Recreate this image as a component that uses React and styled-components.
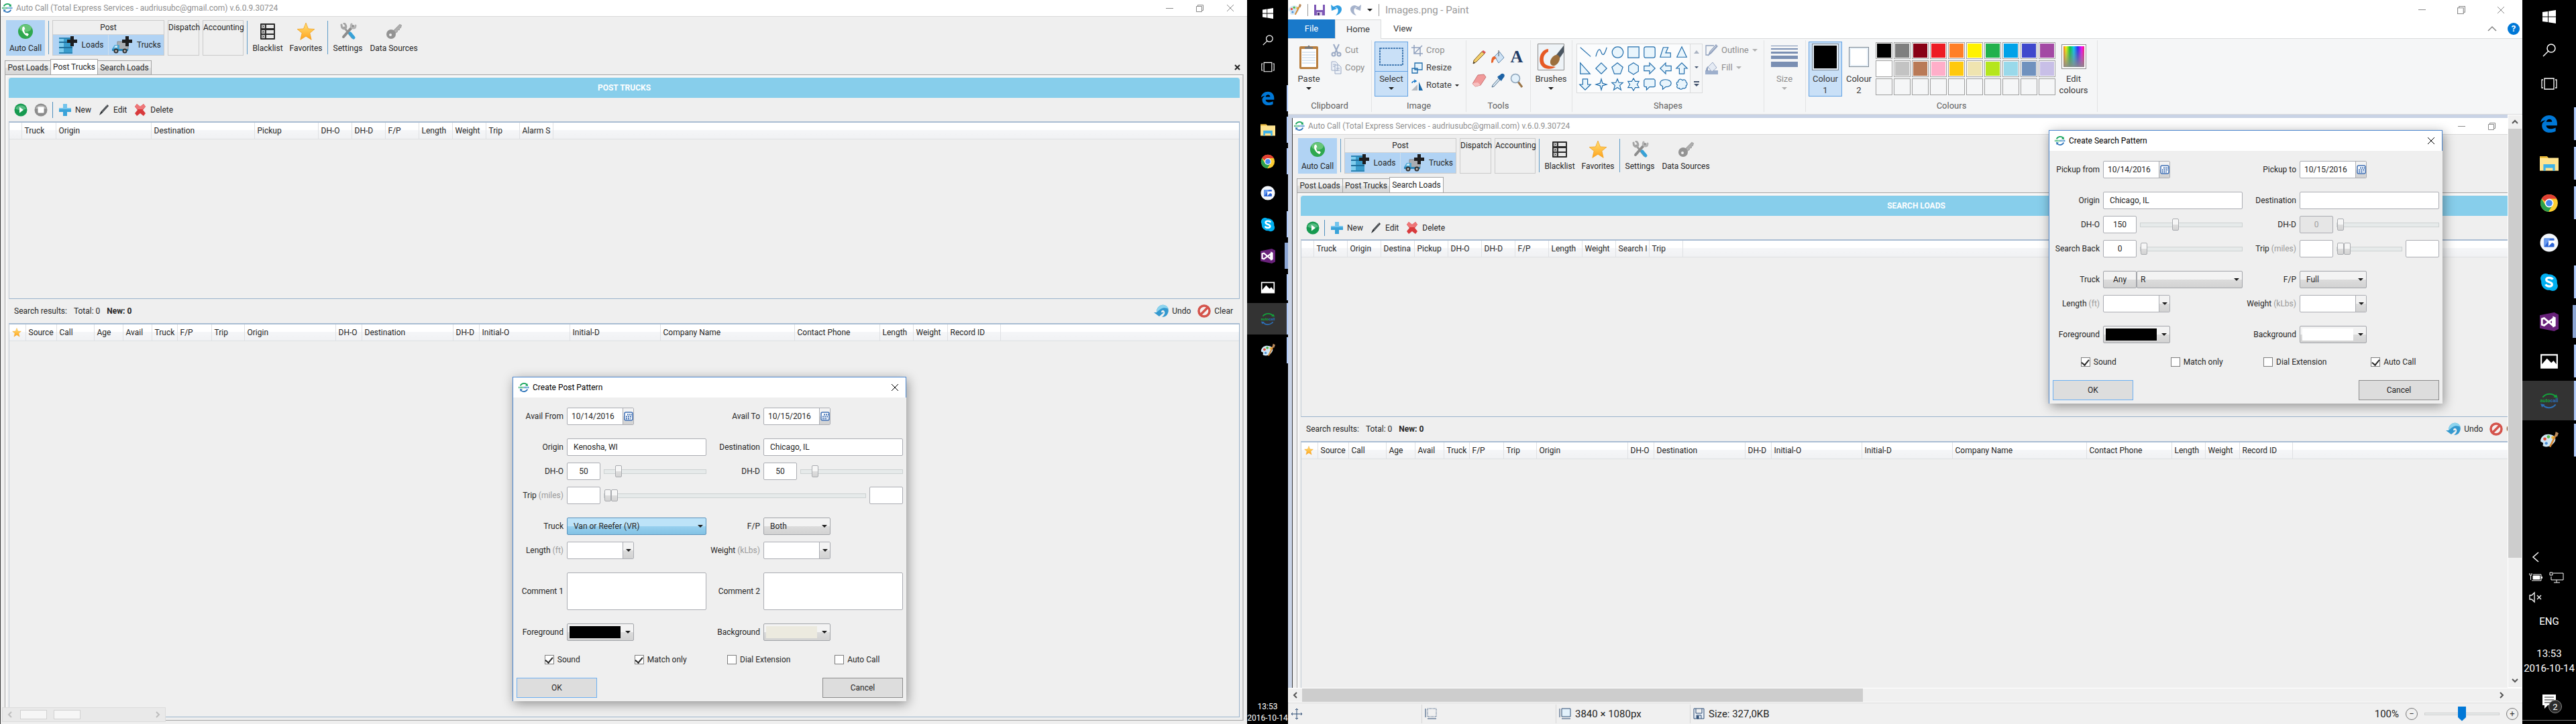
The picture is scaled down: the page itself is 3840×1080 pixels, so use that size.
import React, { useId } from "react";
import styled, { createGlobalStyle, css } from "styled-components";

const GlobalStyle = createGlobalStyle`
  * { box-sizing: border-box; }
  body { margin: 0; background: #000; }
  body, button, input, select, textarea {
    font-family: Roboto, "Open Sans", "Noto Sans", sans-serif;
    font-size: 12px;
    line-height: 16px;
    color: #262626;
  }
  button { margin: 0; padding: 0; border: 0; background: none; }
  input, select, textarea { margin: 0; }
`;

const Svg = styled.svg`
  display: block;
  flex: none;
  width: ${(p) => p.$w}px;
  height: ${(p) => p.$h || p.$w}px;
`;

/* ---------- icons ---------- */

const Logo = ({ size = 16 }) => (
  <Svg $w={size} viewBox="0 0 24 24" fill="none">
    <path d="M4 8C7 2 15 1 19 6" stroke="#14a35a" strokeWidth="2.4" />
    <path d="M21 9l-6-1 5-5z" fill="#14a35a" />
    <path d="M20 16C17 22 9 23 5 18" stroke="#2b72b8" strokeWidth="2.4" />
    <path d="M3 15l6 1-5 5z" fill="#2b72b8" />
    <path d="M0 12h12" stroke="#35b06e" strokeWidth="4" strokeDasharray="2 1" />
    <path d="M12 12h12" stroke="#3f8ac9" strokeWidth="4" strokeDasharray="2 1" />
  </Svg>
);

const PhoneIcon = () => (
  <Svg $w={24} viewBox="0 0 24 24">
    <circle cx="12" cy="12" r="11" fill="#2fa84f" />
    <ellipse cx="12" cy="7" rx="9" ry="5.5" fill="#7fd28c" opacity=".7" />
    <path d="M8 5c-3 4 1 12 7 14l2-3-3-2-1.500 1C11 13.500 10 11.500 10 9.500l1.500-1L10 4.500z" fill="#fff" />
  </Svg>
);

const PlusMark = ({ x, y }) => (
  <path d={`M${x + 5} ${y}h5v5h5v5h-5v5h-5v-5h-5v-5h5z`} fill="#1d1d1f" />
);

const BarrelIcon = () => (
  <Svg $w={30} $h={28} viewBox="0 0 30 28">
    <path d="M2 4h20v22H2z" fill="#3a9ccc" />
    <path d="M2 4h7v22H2z" fill="#7fcdee" />
    <path d="M2 10h20M2 18h20" stroke="#1f6d9a" strokeWidth="2" />
    <path d="M2 4h20M2 26h20" stroke="#2b84b4" strokeWidth="2" />
    <PlusMark x={14} y={1} />
  </Svg>
);

const TruckIcon = () => (
  <Svg $w={32} $h={28} viewBox="0 0 32 28">
    <path d="M9 9h16v12H9z" fill="#a9adb2" stroke="#85898e" />
    <path d="M1 20l4-6h7v8H1z" fill="#4aa5d3" />
    <path d="M1 20h24v3H1z" fill="#2a85b8" />
    <path d="M4 18l2-3h3v3z" fill="#cdeaf7" />
    <circle cx="7" cy="23" r="3.500" fill="#333" />
    <circle cx="7" cy="23" r="1.500" fill="#ccc" />
    <circle cx="20" cy="23" r="3.500" fill="#333" />
    <circle cx="20" cy="23" r="1.500" fill="#ccc" />
    <PlusMark x={16} y={1} />
  </Svg>
);

const BlacklistIcon = () => (
  <Svg $w={24} $h={26} viewBox="0 0 24 26">
    <rect x="1" y="1" width="22" height="24" rx="1" fill="#2b2b2b" />
    {[3, 11, 18].map((y) => (
      <g key={y}>
        <rect x="3" y={y} width="5" height="5" fill="#ddd" />
        <path d={`M4 ${y + 1}l3 3m0-3l-3 3`} stroke="#222" />
        <rect x="10" y={y} width="11" height="5" fill="#e6e6e6" />
      </g>
    ))}
  </Svg>
);

const StarIcon = ({ size = 28 }) => (
  <Svg $w={size} viewBox="0 0 24 24">
    <defs>
      <linearGradient id="starFill" x1="0" y1="0" x2="0" y2="1">
        <stop offset="0" stopColor="#ffe27a" />
        <stop offset="1" stopColor="#ffa21a" />
      </linearGradient>
    </defs>
    <path
      d="M12 1l3 7.500 8 .5-6 5 2 8.500-7-4.500-7 4.500 2-8.500-6-5 8-.5z"
      fill="url(#starFill)"
      stroke="#f0a021"
      strokeWidth=".7"
    />
  </Svg>
);

const SettingsIcon = () => (
  <Svg $w={26} viewBox="0 0 26 26" fill="none" strokeLinecap="round">
    <path d="M7 7l12 15" stroke="#9c9c9c" strokeWidth="3" />
    <path d="M3 3c0 5 3 7 6 5 2-2 0-6-2-7" stroke="#a5a5a5" strokeWidth="3" />
    <path d="M20 5L6 21" stroke="#8d8d8d" strokeWidth="4" />
    <path d="M18 2c-2 4 0 6 3 6 2 0 3-2 3-4" stroke="#b3b3b3" strokeWidth="3" />
    <path d="M16 16l5 6" stroke="#37a2d8" strokeWidth="5" />
  </Svg>
);

const KeyIcon = () => (
  <Svg $w={26} viewBox="0 0 26 26" fill="none">
    <path d="M10 15L22 3l2 1-1 3-2 1v2l-3 1v2l-4 3" fill="#b5b5b5" stroke="#a8a8a8" strokeWidth="2" />
    <circle cx="9" cy="17" r="7" fill="#939393" />
    <circle cx="8" cy="18" r="2" fill="#efefef" />
  </Svg>
);

const PlayIcon = () => (
  <Svg $w={20} viewBox="0 0 20 20">
    <circle cx="10" cy="10" r="9.500" fill="#169a50" />
    <path d="M2 8a8.500 7 0 0 1 16 0c-5 3-11 3-16 0z" fill="#6fc996" opacity=".7" />
    <path d="M8 5.500v9l6-4.500z" fill="#fff" />
  </Svg>
);

const StopIcon = () => (
  <Svg $w={20} viewBox="0 0 20 20">
    <circle cx="10" cy="10" r="9.500" fill="#8c8c8c" />
    <path d="M2 8a8.500 7 0 0 1 16 0z" fill="#b9b9b9" />
    <rect x="5.500" y="5.500" width="9" height="9" rx="1" fill="#fff" />
  </Svg>
);

const AddIcon = () => (
  <Svg $w={20} viewBox="0 0 20 20">
    <path d="M7 1h6v6h6v6h-6v6H7v-6H1V7h6z" fill="#3aa3d9" />
    <path d="M7 1h6v6h6v2H1V7h6z" fill="#73c4ec" />
  </Svg>
);

const PenIcon = () => (
  <Svg $w={18} viewBox="0 0 18 18">
    <path d="M14 1l2 2L6 14l-4 3 2-5z" fill="#2b2f33" />
    <path d="M13 2l1 1-8 9" stroke="#8b9095" fill="none" />
  </Svg>
);

const DeleteIcon = () => (
  <Svg $w={20} viewBox="0 0 20 20">
    <path d="M2 5l3-4 5 4 5-4 3 4-4 5 4 5-3 4-5-4-5 4-3-4 4-5z" fill="#d83a3c" />
    <path d="M2 5l3-4 5 4 5-4 3 4-4 4H6z" fill="#ee7678" />
  </Svg>
);

const UndoIcon = () => (
  <Svg $w={22} $h={20} viewBox="0 0 22 20">
    <path d="M0 12h4C4 4 10 0 15 1c6 1 8 7 6 12-1 3-4 6-9 6 4-3 5-6 4-8-1-3-4-3-5 0v1h4l-7 6z" fill="#3499cf" />
    <path d="M4 12C4 4 10 0 15 1c4 .5 6 3 7 6-5-3-10-3-18 5z" fill="#8dd4ee" />
  </Svg>
);

const ClearIcon = () => (
  <Svg $w={20} viewBox="0 0 20 20" fill="none">
    <circle cx="10" cy="10" r="8" stroke="#d4534b" strokeWidth="3.500" fill="#f5f0f0" />
    <path d="M5 15L15 5" stroke="#d4534b" strokeWidth="3.500" />
  </Svg>
);

const CalendarIcon = () => (
  <Svg $w={14} viewBox="0 0 14 14">
    <rect x="1" y="1" width="12" height="12" rx="2" fill="#fff" stroke="#3c6eb4" strokeWidth="1.500" />
    <path d="M5 4.500h7M3 7.500h9M3 10.500h7" stroke="#3c6eb4" strokeWidth="2" strokeDasharray="2 1" />
  </Svg>
);

const Caret = styled.span`
  display: block;
  flex: none;
  width: 0;
  height: 0;
  border: ${(p) => p.$s || 4}px solid transparent;
  border-bottom: 0;
  border-top-color: ${(p) => p.$color || "#1e1e1e"};
  pointer-events: none;
`;

const CloseGlyph = ({ color = "#000", size = 12 }) => (
  <Svg $w={size} viewBox="0 0 12 12" fill="none" stroke={color}>
    <path d="M1 1l10 10M11 1L1 11" />
  </Svg>
);

const MinGlyph = () => (
  <Svg $w={11} viewBox="0 0 11 11" stroke="#8a8a8a">
    <path d="M0 5.500h11" />
  </Svg>
);

const RestoreGlyph = ({ size = 11 }) => (
  <Svg $w={size} viewBox="0 0 11 11" fill="none" stroke="#8a8a8a">
    <path d="M.5 2.500h8v8h-8zM2.500 2.500v-2h8v8h-2" />
  </Svg>
);

/* ---------- form parts ---------- */

const field = css`
  width: 100%;
  min-width: 0;
  height: 26px;
  border: 1px solid #abadb3;
  border-radius: 2px;
  background: #fff;
  outline: 0;
`;

const chrome = css`
  border: 1px solid #a3a5aa;
  border-radius: 2px;
  background: linear-gradient(#f3f3f3 0 50%, #dcdcdc 50%, #d2d2d2);
`;

const TextInput = styled.input`
  ${field}
  padding: ${(p) => (p.$center ? "0" : "0 9px")};
  text-align: ${(p) => (p.$center ? "center" : "left")};
  &:disabled { background: #e6e6e6; color: #a0a0a0; }
`;

const TextArea = styled.textarea`
  ${field}
  display: block;
  height: 56px;
  resize: none;
`;

const Joined = styled.div`
  display: flex;
  width: 100px;
  height: 26px;
  border: 1px solid #abadb3;
  border-radius: 2px;
  background: #fff;
  overflow: hidden;
  input { flex: 1; min-width: 0; border: 0; outline: 0; padding: 0 6px; background: none; }
  button {
    display: grid;
    place-items: center;
    width: 16px;
    border-left: 1px solid #abadb3;
    background: linear-gradient(#f3f3f3 0 50%, #dcdcdc 50%, #d2d2d2);
  }
`;

const SelectBox = styled.div`
  display: grid;
  align-items: center;
  width: ${(p) => p.$w || "100%"};
  min-width: 0;
  > * { grid-area: 1 / 1; }
  > span { justify-self: end; margin-right: 5px; }
  select {
    ${chrome}
    appearance: none;
    width: 100%;
    height: 26px;
    padding: 0 9px;
    ${(p) => p.$tight && "padding: 0 5px;"}
    ${(p) =>
      p.$hot &&
      "border-color: #5a93bd; background: linear-gradient(#bde3f8 0 50%, #98d0ef 50%, #82c2e4);"}
  }
`;

const AnyButton = styled.button`
  ${chrome}
  flex: none;
  width: 50px;
  height: 26px;
`;

const ColourPick = styled.button`
  ${chrome}
  display: flex;
  align-items: center;
  justify-content: space-between;
  width: 100px;
  height: 26px;
  padding: 0 4px 0 3px;
  i { width: 76px; height: 18px; background: ${(p) => p.$color}; }
`;

const Range = styled.input`
  appearance: none;
  flex: 1;
  width: 100%;
  min-width: 0;
  height: 18px;
  background: none;
  &::-webkit-slider-runnable-track {
    height: 7px;
    border: 1px solid #cdd2d2;
    background: #e6eaea;
    ${(p) => p.$bare && "border-color: transparent; background: none;"}
  }
  &::-webkit-slider-thumb {
    appearance: none;
    width: 10px;
    height: 18px;
    margin-top: -7px;
    border: 1px solid #a9abaf;
    border-radius: 2px;
    background: linear-gradient(#f6f6f6 0 50%, #dedede 50%, #d4d4d4);
  }
`;

const DoubleRange = styled.div`
  display: grid;
  flex: 1;
  min-width: 0;
  > * { grid-area: 1 / 1; }
  > :last-child { margin-left: 10px; width: auto; }
`;

const Inline = styled.div`
  display: flex;
  align-items: center;
  gap: ${(p) => (p.$flush ? 0 : 5)}px;
  min-width: 0;
  ${(p) => p.$span && "grid-column: 2 / -1;"}
`;

const Small = styled.div`
  flex: none;
  width: 50px;
`;

const FormRow = styled.div`
  display: grid;
  grid-template-columns: 80px 1fr 85px 1fr;
  align-items: center;
  margin-top: ${(p) => (p.$gap ? 20 : 10)}px;
`;

const Label = styled.label`
  padding-right: 5px;
  text-align: right;
  white-space: nowrap;
  i { font-style: normal; color: #9a9a9a; }
`;

const Unit = ({ text, unit, id }) => (
  <Label htmlFor={id}>
    {text}
    {unit && <i> ({unit})</i>}
  </Label>
);

const DateField = ({ label, value }) => {
  const id = useId();
  return (
    <>
      <Unit text={label} id={id} />
      <Joined>
        <input id={id} defaultValue={value} />
        <button aria-label={`${label} calendar`}><CalendarIcon /></button>
      </Joined>
    </>
  );
};

const TextField = ({ label, value = "" }) => {
  const id = useId();
  return (
    <>
      <Unit text={label} id={id} />
      <TextInput id={id} defaultValue={value} />
    </>
  );
};

const AreaField = ({ label }) => {
  const id = useId();
  return (
    <>
      <Unit text={label} id={id} />
      <TextArea id={id} />
    </>
  );
};

const RangeField = ({ label, value, max = 450, disabled }) => {
  const id = useId();
  return (
    <>
      <Unit text={label} id={id} />
      <Inline>
        <Small><TextInput $center id={id} defaultValue={value} disabled={disabled} /></Small>
        <Range type="range" aria-label={`${label} range`} max={max} defaultValue={value} disabled={disabled} />
      </Inline>
    </>
  );
};

const TripField = ({ span }) => {
  const id = useId();
  return (
    <>
      <Unit text="Trip" unit="miles" id={id} />
      <Inline $span={span}>
        <Small><TextInput $center id={id} /></Small>
        <DoubleRange>
          <Range type="range" aria-label="Minimum trip" defaultValue={0} />
          <Range $bare type="range" aria-label="Maximum trip" defaultValue={0} />
        </DoubleRange>
        <Small><TextInput $center aria-label="Trip to" /></Small>
      </Inline>
    </>
  );
};

const ChoiceField = ({ label, value, w, hot, prefix }) => {
  const id = useId();
  const box = (
    <SelectBox $w={w} $hot={hot} $tight={!!prefix}>
      <select id={id}><option>{value}</option></select>
      <Caret />
    </SelectBox>
  );
  return (
    <>
      <Unit text={label} id={id} />
      {prefix ? <Inline $flush><AnyButton>{prefix}</AnyButton>{box}</Inline> : box}
    </>
  );
};

const ComboField = ({ label, unit }) => {
  const id = useId();
  return (
    <>
      <Unit text={label} unit={unit} id={id} />
      <Joined>
        <input id={id} />
        <button aria-label={`${label} options`}><Caret /></button>
      </Joined>
    </>
  );
};

const ColourField = ({ label, color }) => {
  const id = useId();
  return (
    <>
      <Unit text={label} id={id} />
      <ColourPick id={id} $color={color}><i /><Caret /></ColourPick>
    </>
  );
};

const Checks = styled.div`
  display: grid;
  grid-template-columns: repeat(4, 1fr);
  place-items: center;
  height: 55px;
`;

const CheckLabel = styled.label`
  display: flex;
  align-items: center;
  gap: 5px;
`;

const CheckBox = styled.input`
  appearance: none;
  display: grid;
  place-items: center;
  width: 14px;
  height: 14px;
  border: 1px solid #7e7e7e;
  background: #fff;
  &:checked::before {
    content: "";
    width: 5px;
    height: 9px;
    margin-bottom: 2px;
    border: solid #222;
    border-width: 0 2px 2px 0;
    transform: rotate(40deg);
  }
`;

const CheckRow = ({ checked }) => (
  <Checks>
    {["Sound", "Match only", "Dial Extension", "Auto Call"].map((text) => (
      <CheckLabel key={text}>
        <CheckBox type="checkbox" defaultChecked={checked.includes(text)} />
        {text}
      </CheckLabel>
    ))}
  </Checks>
);

/* ---------- dialogs ---------- */

const DialogFrame = styled.section`
  position: absolute;
  left: ${(p) => p.$x}px;
  top: ${(p) => p.$y}px;
  width: 587px;
  border-left: 1px solid #4a86cf;
  background: #efefef;
  box-shadow: 2px 4px 16px rgba(0, 0, 0, 0.4);
`;

const DialogTitle = styled.header`
  display: flex;
  align-items: center;
  gap: 5px;
  height: 31px;
  padding: 0 10px 0 8px;
  border: solid #4a86cf;
  border-width: 1px 1px 0 0;
  background: #fff;
  color: #000;
  button { margin-left: auto; }
`;

const Form = styled.div`
  padding: 5px 5px 0 0;
`;

const DialogFooter = styled.footer`
  display: flex;
  justify-content: space-between;
  padding: 0 5px 5px;
`;

const DialogButton = styled.button`
  width: 120px;
  height: 30px;
  border: 1px solid ${(p) => (p.$main ? "#6cb0f2" : "#8c8c8c")};
  background: #dddddd;
`;

const Dialog = ({ title, x, y, checked, children }) => (
  <DialogFrame $x={x} $y={y}>
    <DialogTitle>
      <Logo />
      {title}
      <button aria-label="Close"><CloseGlyph /></button>
    </DialogTitle>
    <Form>{children}</Form>
    <CheckRow checked={checked} />
    <DialogFooter>
      <DialogButton $main>OK</DialogButton>
      <DialogButton>Cancel</DialogButton>
    </DialogFooter>
  </DialogFrame>
);

const PostDialog = () => (
  <Dialog title="Create Post Pattern" x={764} y={562} checked={["Sound", "Match only"]}>
    <FormRow><DateField label="Avail From" value="10/14/2016" /><DateField label="Avail To" value="10/15/2016" /></FormRow>
    <FormRow $gap><TextField label="Origin" value="Kenosha, WI" /><TextField label="Destination" value="Chicago, IL" /></FormRow>
    <FormRow><RangeField label="DH-O" value={50} /><RangeField label="DH-D" value={50} /></FormRow>
    <FormRow><TripField span /></FormRow>
    <FormRow $gap><ChoiceField label="Truck" value="Van or Reefer (VR)" hot /><ChoiceField label="F/P" value="Both" w="100px" /></FormRow>
    <FormRow><ComboField label="Length" unit="ft" /><ComboField label="Weight" unit="kLbs" /></FormRow>
    <FormRow $gap><AreaField label="Comment 1" /><AreaField label="Comment 2" /></FormRow>
    <FormRow $gap><ColourField label="Foreground" color="#000" /><ColourField label="Background" color="#eceadf" /></FormRow>
  </Dialog>
);

const SearchDialog = () => (
  <Dialog title="Create Search Pattern" x={1134} y={23} checked={["Sound", "Auto Call"]}>
    <FormRow><DateField label="Pickup from" value="10/14/2016" /><DateField label="Pickup to" value="10/15/2016" /></FormRow>
    <FormRow $gap><TextField label="Origin" value="Chicago, IL" /><TextField label="Destination" /></FormRow>
    <FormRow><RangeField label="DH-O" value={150} /><RangeField label="DH-D" value={0} disabled /></FormRow>
    <FormRow><RangeField label="Search Back" value={0} /><TripField /></FormRow>
    <FormRow $gap><ChoiceField label="Truck" value="R" prefix="Any" /><ChoiceField label="F/P" value="Full" w="100px" /></FormRow>
    <FormRow><ComboField label="Length" unit="ft" /><ComboField label="Weight" unit="kLbs" /></FormRow>
    <FormRow $gap><ColourField label="Foreground" color="#000" /><ColourField label="Background" color="#fff" /></FormRow>
  </Dialog>
);

/* ---------- Auto Call window ---------- */

const AppFrame = styled.section`
  display: flex;
  flex-direction: column;
  flex: none;
  width: calc(50vw - 61px);
  height: 100vh;
  border-left: 1px solid #3a3a3a;
  background: #efefef;
  white-space: nowrap;
`;

const AppTitle = styled.header`
  display: flex;
  align-items: center;
  gap: 5px;
  height: 25px;
  padding: 0 19px 0 2px;
  border-bottom: 1px solid #d9d9d9;
  background: #fff;
  color: #8f8f8f;
`;

const WindowButtons = styled.div`
  display: flex;
  gap: ${(p) => p.$gap}px;
  margin-left: auto;
`;

const AppToolbar = styled.div`
  display: flex;
  gap: 5px;
  height: 60px;
  padding: 5px 8px 2px;
`;

const Tool = styled.button`
  display: flex;
  flex-direction: column;
  align-items: center;
  justify-content: space-between;
  flex: none;
  width: ${(p) => p.$w}px;
  padding: 3px 0;
  background: ${(p) => (p.$on ? "#b1d3f4" : "none")};
`;

const ToolArt = styled.span`
  display: grid;
  place-items: center;
  height: 28px;
`;

const Rule = styled.span`
  flex: none;
  width: 1px;
  margin: 1px 0 2px;
  background: #5f9cc8;
`;

const Group = styled.div`
  display: flex;
  flex-direction: column;
  flex: none;
  width: ${(p) => p.$w}px;
  border: 1px solid #cbcbcb;
  text-align: center;
  > span { line-height: 20px; }
  > div { display: flex; flex: 1; border-top: 1px solid #d5d5d5; }
`;

const GroupButton = styled.button`
  display: flex;
  align-items: center;
  justify-content: center;
  gap: 6px;
  flex: 1;
  background: #b1d3f4;
  & + & { border-left: 1px solid #cfdfee; }
`;

const TabBar = styled.div`
  display: flex;
  align-items: flex-end;
  height: 26px;
  padding: 0 10px 0 6px;
  > button:last-child { margin-left: auto; align-self: center; margin-top: 4px; font-weight: 700; }
`;

const Tab = styled.button`
  width: ${(p) => p.$w}px;
  height: ${(p) => (p.$on ? 23 : 21)}px;
  margin-right: -1px;
  border: 1px solid #a3a3a3;
  border-bottom: 0;
  background: ${(p) => (p.$on ? "#fff" : "linear-gradient(#f2f2f2 0 50%, #e2e2e2 50%, #d6d6d6)")};
`;

const TabPanel = styled.div`
  display: flex;
  flex-direction: column;
  flex: 1;
  min-height: 0;
  margin: 0 5px 5px 6px;
  padding: 4px 4px 4px 5px;
  border: 1px solid #a5a5a5;
  border-right: 2px solid #c4c4c4;
  box-shadow: inset 3px 3px 0 #f7f7f7;
`;

const Banner = styled.h1`
  flex: none;
  margin: 0;
  border-radius: 4px 4px 0 0;
  background: #87ceeb;
  color: #fff;
  font-size: 12px;
  line-height: 30px;
  text-align: center;
`;

const Actions = styled.div`
  display: flex;
  align-items: center;
  gap: ${(p) => (p.$results ? 10 : 10)}px;
  flex: none;
  height: ${(p) => (p.$results ? 36 : 35)}px;
  padding: 0 10px 0 8px;
  hr { width: 1px; height: 24px; margin: 0 -2px 0 -3px; border: 0; background: #4f8fbd; }
`;

const Action = styled.button`
  display: flex;
  align-items: center;
  gap: 5px;
  ${(p) => p.$end && "margin-left: auto;"}
`;

const List = styled.div`
  flex: ${(p) => (p.$fill ? "1" : "0 0 265px")};
  min-height: 0;
  border: 1px solid #9ab3cc;
  border-top: 2px solid #a9bdd3;
  border-left-color: #c3ccd6;
`;

const Table = styled.table`
  width: 100%;
  border-collapse: collapse;
  table-layout: fixed;
  th {
    height: 24px;
    padding: 0 0 0 4px;
    border: solid #dfe1e4;
    border-width: 0 1px 1px 0;
    background: linear-gradient(#fff 0 45%, #f5f6f8 45%, #f0f1f3);
    font-weight: 400;
    text-align: left;
    overflow: hidden;
  }
  th:last-child { border-right: 0; }
`;

const Columns = ({ items }) => (
  <Table>
    <colgroup>
      {items.map(([, w], i) => <col key={i} width={w} />)}
      <col />
    </colgroup>
    <thead>
      <tr>
        {items.map(([name], i) => <th key={i} scope="col">{name}</th>)}
        <th />
      </tr>
    </thead>
  </Table>
);

const POST_COLUMNS = [
  ["", 18], ["Truck", 51], ["Origin", 142], ["Destination", 154], ["Pickup", 95], ["DH-O", 50],
  ["DH-D", 50], ["F/P", 50], ["Length", 50], ["Weight", 50], ["Trip", 50], ["Alarm S", 50],
];

const SEARCH_COLUMNS = [
  ["", 18], ["Truck", 50], ["Origin", 50], ["Destina", 50], ["Pickup", 50], ["DH-O", 50],
  ["DH-D", 50], ["F/P", 50], ["Length", 50], ["Weight", 50], ["Search I", 50], ["Trip", 50],
];

const RESULT_COLUMNS = [
  [<StarIcon key="star" size={14} />, 24], ["Source", 46], ["Call", 56], ["Age", 43], ["Avail", 43], ["Truck", 38],
  ["F/P", 51], ["Trip", 49], ["Origin", 136], ["DH-O", 39], ["Destination", 136], ["DH-D", 39],
  ["Initial-O", 135], ["Initial-D", 135], ["Company Name", 200], ["Contact Phone", 127],
  ["Length", 50], ["Weight", 51], ["Record ID", 79],
];

const TABS = [["Post Loads", 69], ["Post Trucks", 71], ["Search Loads", 81]];

const AppWindow = ({ active, columns, stoppable }) => (
  <AppFrame>
    <AppTitle>
      <Logo />
      Auto Call (Total Express Services - audriusubc@gmail.com) v.6.0.9.30724
      <WindowButtons $gap={34}>
        <button aria-label="Minimise"><MinGlyph /></button>
        <button aria-label="Restore"><RestoreGlyph /></button>
        <button aria-label="Close window"><CloseGlyph color="#8a8a8a" size={12} /></button>
      </WindowButtons>
    </AppTitle>
    <AppToolbar>
      <Tool $w={58} $on><ToolArt><PhoneIcon /></ToolArt>Auto Call</Tool>
      <Rule />
      <Group $w={167}>
        <span>Post</span>
        <div>
          <GroupButton><BarrelIcon />Loads</GroupButton>
          <GroupButton><TruckIcon />Trucks</GroupButton>
        </div>
      </Group>
      <Group $w={47}><span>Dispatch</span></Group>
      <Group $w={61}><span>Accounting</span></Group>
      <Rule />
      <Tool $w={50}><ToolArt><BlacklistIcon /></ToolArt>Blacklist</Tool>
      <Tool $w={54}><ToolArt><StarIcon /></ToolArt>Favorites</Tool>
      <Rule />
      <Tool $w={49}><ToolArt><SettingsIcon /></ToolArt>Settings</Tool>
      <Tool $w={78}><ToolArt><KeyIcon /></ToolArt>Data Sources</Tool>
    </AppToolbar>
    <TabBar>
      {TABS.map(([name, w]) => <Tab key={name} $w={w} $on={name === active}>{name}</Tab>)}
      <button aria-label="Close tab">
        <Svg $w={9} viewBox="0 0 9 9" stroke="#222" strokeWidth="2"><path d="M1 1l7 7M8 1L1 8" /></Svg>
      </button>
    </TabBar>
    <TabPanel>
      <Banner>{active.toUpperCase()}</Banner>
      <Actions>
        <Action aria-label="Start"><PlayIcon /></Action>
        {stoppable && <Action aria-label="Stop"><StopIcon /></Action>}
        <hr />
        <Action><AddIcon />New</Action>
        <Action><PenIcon />Edit</Action>
        <Action><DeleteIcon />Delete</Action>
      </Actions>
      <List><Columns items={columns} /></List>
      <Actions $results>
        <span>Search results:</span>
        <span>Total: 0</span>
        <b>New: 0</b>
        <Action $end><UndoIcon />Undo</Action>
        <Action><ClearIcon />Clear</Action>
      </Actions>
      <List $fill><Columns items={RESULT_COLUMNS} /></List>
    </TabPanel>
  </AppFrame>
);

/* ---------- task bars ---------- */

const Bar = styled.nav`
  display: flex;
  flex-direction: column;
  flex: none;
  width: ${(p) => (p.$large ? 80 : 61)}px;
  height: 100vh;
  background: #000;
  color: #fff;
`;

const SystemButton = styled.button`
  display: grid;
  place-items: center;
  flex: none;
  height: ${(p) => (p.$large ? 50 : 40)}px;
`;

const TaskList = styled.div`
  padding-top: ${(p) => (p.$large ? 5 : 3)}px;
`;

const TaskButton = styled.button`
  display: grid;
  grid-template-columns: 5px 1fr 5px;
  place-items: center;
  width: 100%;
  height: ${(p) => (p.$large ? 59 : 47)}px;
  background: ${(p) => (p.$mark === "active" ? "#333" : "none")};
  svg { grid-column: 2; }
  &::after {
    content: "";
    grid-area: 1 / 3;
    justify-self: end;
    width: ${(p) => ({ none: 0, double: 5 })[p.$mark] ?? (p.$large ? 3 : 2)}px;
    height: ${(p) => (p.$mark === "active" ? "100%" : "82%")};
    background: ${(p) => (p.$mark === "double" ? "#8ba5d3" : "#b0cbfb")};
  }
`;

const Tray = styled.div`
  display: flex;
  flex-direction: column;
  margin-top: auto;
  font-size: ${(p) => (p.$large ? 15 : 12)}px;
  line-height: ${(p) => (p.$large ? 22 : 17)}px;
  text-align: center;
`;

const TrayRow = styled.div`
  display: flex;
  align-items: center;
  gap: 10px;
  height: 30px;
  padding-left: 10px;
`;

const TrayLabel = styled.div`
  display: grid;
  align-content: center;
  height: ${(p) => p.$h}px;
`;

const ShowDesktop = styled.div`
  height: 6px;
  border-top: 1px solid #777;
`;

const Windows = ({ s }) => (
  <Svg $w={s} viewBox="0 0 20 20" fill="#fff">
    <path d="M0 3l8-1v7.500H0zM9 1.800L20 0v9.500H9zM0 10.500h8V18l-8-1zM9 10.500h11V20L9 18.200z" />
  </Svg>
);

const SearchGlyph = ({ s }) => (
  <Svg $w={s} viewBox="0 0 20 20" fill="none" stroke="#fff" strokeWidth="1.500">
    <circle cx="13" cy="7" r="6" />
    <path d="M9 11L1 19" />
  </Svg>
);

const TaskView = ({ s }) => (
  <Svg $w={s + 4} viewBox="0 0 24 24" fill="none" stroke="#fff" strokeWidth="1.300">
    <path d="M5 4h14v16H5zM3 6H1v12h2M21 6h2v12h-2" />
  </Svg>
);

const TASKS = [
  ["Edge", "on", (
    <path d="M1 11C2 5 7 1 13 1c7 0 11 5 11 11v3H9c0 5 7 6 13 3v5C14 27 3 25 3 15c0-3 2-5 5-7-2 0-5 1-7 3zm8-1h8c0-5-7-5-8 0z" fill="#0078d7" />
  )],
  ["File Explorer", "on", (
    <>
      <path d="M0 3h10l2 2h14v18H0z" fill="#ffe490" />
      <path d="M0 3h10l2 2H0z" fill="#e9b52c" />
      <path d="M5 14h16v9h-3v-4H8v4H5z" fill="#3fb2e8" />
    </>
  )],
  ["Chrome", "on", (
    <>
      <circle cx="13" cy="13" r="12" fill="#fccd32" />
      <path d="M13 1a12 12 0 0 1 10.500 6H13l-5 4-5.500-4A12 12 0 0 1 13 1z" fill="#e24134" />
      <path d="M2.500 7A12 12 0 0 0 12 25l5-8-9-1z" fill="#2ca04e" />
      <circle cx="13" cy="13" r="6" fill="#fff" />
      <circle cx="13" cy="13" r="4.500" fill="#4688f1" />
    </>
  )],
  ["Remote Desktop", "none", (
    <>
      <circle cx="13" cy="13" r="12.500" fill="#f4f7fb" />
      <rect x="6" y="7" width="14" height="12" rx="1" fill="#2a62d4" />
      <path d="M6 7h9L6 19z" fill="#6a9df0" />
      <path d="M12 10h9v5l-4-2-5 5z" fill="#fff" />
    </>
  )],
  ["Skype", "on", (
    <>
      <circle cx="8" cy="8" r="7" fill="#00aff0" />
      <circle cx="18" cy="18" r="7" fill="#00aff0" />
      <circle cx="13" cy="13" r="11" fill="#00aff0" />
      <path d="M18 9c-2-3-9-3-9 .5 0 4 8 2.500 8 6.500 0 3.500-7 3.500-9 0" stroke="#fff" strokeWidth="3" fill="none" />
    </>
  )],
  ["Visual Studio", "double", (
    <>
      <path d="M0 4l20-4 6 3v20l-6 3-20-4z" fill="#68217a" />
      <path d="M3 9v8l3 1 12-9v9L6 8z" stroke="#fff" strokeWidth="2.500" fill="none" />
      <path d="M18 5l4 2v12l-4 2z" fill="#fff" />
    </>
  )],
  ["Photos", "on", (
    <>
      <path d="M1 3h24v20H1z" fill="#fff" />
      <path d="M3 5h20v12l-4-5-3 3-6-6-7 8z" fill="#000" />
    </>
  )],
  ["Auto Call", "active", (
    <>
      <path d="M4 8C9 2 18 2 23 8" stroke="#14a03c" strokeWidth="2" fill="none" />
      <path d="M25 9l-6-1 4-4z" fill="#14a03c" />
      <path d="M22 18C17 24 8 24 4 18" stroke="#2d6fb5" strokeWidth="2" fill="none" />
      <path d="M1 17l6 1-4 4z" fill="#2d6fb5" />
      <text x="13" y="15" textAnchor="middle" fontSize="7" fontWeight="700" fill="#14a03c">
        auto<tspan fill="#2d6fb5">call</tspan>
      </text>
    </>
  )],
  ["Paint", "on", (
    <>
      <path d="M1 13C2 6 9 3 16 5c7 2 7 8 3 12-3 4-9 6-14 4-2-1 1-4-1-5-1-1-3 0-3-3z" fill="#cfe6f5" />
      <circle cx="7" cy="11" r="2.200" fill="#e2503d" />
      <circle cx="12" cy="8" r="2.200" fill="#58b947" />
      <circle cx="18" cy="9" r="2" fill="#f2b632" />
      <circle cx="9" cy="17" r="2" fill="#4d8fd6" />
      <path d="M24 2L14 22" stroke="#d78a37" strokeWidth="2.500" />
      <path d="M22 1l4 2-2 5-3-1z" fill="#b98b5f" />
    </>
  )],
];

const TaskBar = ({ large }) => {
  const s = large ? 20 : 16;
  return (
    <Bar $large={large}>
      <SystemButton $large={large} aria-label="Start"><Windows s={s} /></SystemButton>
      <SystemButton $large={large} aria-label="Search"><SearchGlyph s={s} /></SystemButton>
      <SystemButton $large={large} aria-label="Task view"><TaskView s={s} /></SystemButton>
      <TaskList $large={large}>
        {TASKS.map(([name, mark, art]) => (
          <TaskButton key={name} $large={large} $mark={mark} aria-label={name}>
            <Svg $w={large ? 28 : 22} viewBox="0 0 26 26" overflow="visible">{art}</Svg>
          </TaskButton>
        ))}
      </TaskList>
      <Tray $large={large}>
        {large && (
          <>
            <TrayRow>
              <Svg $w={20} viewBox="0 0 20 20" fill="none" stroke="#fff" strokeWidth="1.500"><path d="M14 3L6 10l8 7" /></Svg>
            </TrayRow>
            <TrayRow>
              <Svg $w={20} viewBox="0 0 20 20" fill="none" stroke="#fff">
                <path d="M1 4v3h3V4M2.500 7v7M6 6h12v9H4" />
                <path d="M6 8h10v5H6z" fill="#fff" />
                <path d="M19 9v3" strokeWidth="2" />
              </Svg>
              <Svg $w={22} viewBox="0 0 22 20" fill="none" stroke="#fff">
                <path d="M6 4h15v10H3V9M1 3h4v4H1zM11 14v4M7 18h9" />
              </Svg>
            </TrayRow>
            <TrayRow>
              <Svg $w={20} viewBox="0 0 20 20" fill="none" stroke="#fff" strokeWidth="1.300">
                <path d="M1 7h3l4-4v14l-4-4H1zM12 7l6 6M18 7l-6 6" />
              </Svg>
            </TrayRow>
            <TrayLabel $h={42}>ENG</TrayLabel>
          </>
        )}
        <TrayLabel $h={large ? 76 : 34}>
          <span>13:53</span>
          <span>2016-10-14</span>
        </TrayLabel>
        {large && (
          <>
            <SystemButton $large aria-label="Notifications">
              <Svg $w={40} $h={36} viewBox="0 0 40 36">
                <path d="M10 5h20v16H18l-5 5v-5h-3z" fill="#fff" />
                <path d="M13 9h14M13 13h14M13 17h9" stroke="#222" />
                <circle cx="29" cy="23" r="9.500" fill="#2b2b2b" stroke="#888" />
                <text x="29" y="28" textAnchor="middle" fontSize="13" fill="#fff">2</text>
              </Svg>
            </SystemButton>
            <ShowDesktop />
          </>
        )}
      </Tray>
    </Bar>
  );
};

/* ---------- Paint ---------- */

const PaintFrame = styled.section`
  display: flex;
  flex-direction: column;
  flex: 1;
  min-width: 0;
  height: 100vh;
  background: #fff;
  font-size: 13px;
  button { font-size: 13px; color: #3b3b3b; }
`;

const PaintTitle = styled.header`
  display: flex;
  align-items: center;
  gap: 9px;
  flex: none;
  height: 29px;
  padding-right: 26px;
  color: #999;
  font-size: 15px;
  hr { width: 1px; height: 18px; margin: 0; border: 0; background: #999; }
`;

const PaintTabs = styled.div`
  display: flex;
  align-items: stretch;
  flex: none;
  height: 29px;
  padding-right: 4px;
  border-bottom: 1px solid #dadbdc;
`;

const RibbonTab = styled.button`
  width: ${(p) => p.$w}px;
  ${(p) => p.$file && "&& { background: #1979ca; color: #fff; }"}
  ${(p) => p.$on && "margin-bottom: -1px; border: 1px solid #dadbdc; border-bottom: 0; background: #f5f6f7;"}
`;

const TabTools = styled.div`
  display: flex;
  align-items: center;
  gap: 16px;
  margin-left: auto;
`;

const Help = styled.span`
  display: grid;
  place-items: center;
  width: 18px;
  height: 18px;
  border-radius: 50%;
  background: #0078d7;
  color: #fff;
  font-weight: 700;
`;

const Ribbon = styled.div`
  display: flex;
  flex: none;
  height: 113px;
  padding: 2px 0 3px;
  border-bottom: 1px solid #dadbdc;
  background: #f5f6f7;
`;

const RibbonGroup = styled.div`
  display: flex;
  flex-direction: column;
  justify-content: space-between;
  flex: none;
  width: ${(p) => p.$w}px;
  padding-top: 2px;
  border-right: 1px solid #e2e3e4;
  > footer { color: #5f5f5f; text-align: center; line-height: 18px; }
`;

const RibbonBody = styled.div`
  display: flex;
  gap: ${(p) => p.$gap || 0}px;
  padding: 0 4px;
`;

const BigButton = styled.button`
  display: flex;
  flex-direction: column;
  align-items: center;
  flex: none;
  width: ${(p) => p.$w || 50}px;
  height: 82px;
  line-height: 17px;
  ${(p) => p.$on && "background: #c9e0f7; outline: 1px solid #62a2e4; outline-offset: -1px;"}
  && { color: ${(p) => (p.$off ? "#8d8d8d" : "#3b3b3b")}; }
  > span:first-child {
    display: grid;
    place-items: center;
    align-self: stretch;
    height: 45px;
    margin-bottom: 2px;
    ${(p) => p.$split && "border-bottom: 1px solid #62a2e4;"}
  }
  > span:last-child:not(:first-child) { margin-top: 4px; }
`;

const Stack = styled.div`
  display: flex;
  flex-direction: column;
`;

const RowButton = styled.button`
  display: flex;
  align-items: center;
  gap: 5px;
  height: 26px;
  && { color: ${(p) => (p.$off ? "#8d8d8d" : "#3b3b3b")}; }
`;

const ToolGrid = styled.div`
  display: grid;
  grid-template-columns: repeat(3, 28px);
  grid-auto-rows: 35px;
  place-items: center;
  padding: 5px 0 0 1px;
`;

const Gallery = styled.div`
  display: flex;
  height: 74px;
  margin: 3px 4px 0 2px;
  border: 1px solid #dadbdc;
  background: #fbfcfd;
`;

const ShapeGrid = styled.div`
  display: grid;
  grid-template-columns: repeat(7, 24px);
  grid-auto-rows: 24px;
  place-items: center;
`;

const GalleryScroll = styled.div`
  display: grid;
  place-items: center;
  width: 18px;
  border-left: 1px solid #dadbdc;
  background: #f5f6f7;
`;

const Swatch = styled.span`
  width: ${(p) => p.$w}px;
  height: ${(p) => p.$h}px;
  border: 1px solid #7f8a96;
  background: ${(p) => p.$color};
  box-shadow: inset 0 0 0 2px #e4edf5;
`;

const Palette = styled.div`
  display: grid;
  grid-template-columns: repeat(10, 25px);
  grid-auto-rows: 25px;
  gap: 2px;
  padding-top: 1px;
`;

const PaletteCell = styled.button`
  border: 1px solid #a0a0a0;
  ${(p) => p.$color && `background: ${p.$color}; box-shadow: inset 0 0 0 1px #fff;`}
`;

const Rainbow = styled.span`
  width: 37px;
  height: 37px;
  border: 1px solid #8f8f8f;
  box-shadow: inset 0 0 0 2px #fff;
  background: linear-gradient(transparent, #8a8a8a),
    linear-gradient(90deg, #f22, #ff0, #0c3, #0cf, #22f, #f0f, #f22);
`;

const COLOURS = [
  "#000000", "#7f7f7f", "#880015", "#ed1c24", "#ff7f27", "#fff200", "#22b14c", "#00a2e8", "#3f48cc", "#a349a4",
  "#ffffff", "#c3c3c3", "#b97a57", "#ffaec9", "#ffc90e", "#efe4b0", "#b5e61d", "#99d9ea", "#7092be", "#c8bfe7",
  ...Array(10).fill(""),
];

const SHAPES = [
  "M2 2l17 15", "M1 17C5 2 8 4 10 10s5 6 9-8", "M10.500 1a9 9 0 1 0 .01 0z", "M1 1h18v18H1z",
  "M4 1h12q3 0 3 3v12q0 3-3 3H4q-3 0-3-3V4q0-3 3-3z", "M1 18L6 2h8l-4 9h8v7z", "M10 1l8 17H2z",
  "M2 1l16 18H2z", "M10 1l9 9-9 9-9-9z", "M10 1l9 7-4 11H5L1 8z", "M10 1l8 5v9l-8 5-8-5V6z",
  "M1 6h9V1l9 9-9 9v-5H1z", "M19 6h-9V1l-9 9 9 9v-5h9z", "M6 19v-9H1l9-9 9 9h-5v9z",
  "M6 1v9H1l9 9 9-9h-5V1z", "M10 1l2 7 7 2-7 2-2 7-2-7-7-2 7-2z",
  "M10 1l2.500 6H19l-5 4.500 2 7.500-6-4-6 4 2-7.500L1 7h6.500z",
  "M10 0l3 5h6l-3 5 3 5h-6l-3 5-3-5H1l3-5-3-5h6z", "M3 1h14l2 2v10l-2 1h-7l-5 5v-5H3l-2-1V3z",
  "M10 2c12 0 12 12 0 12l-5 4v-5C-2 10 0 2 10 2z",
  "M5 3c2-3 5-1 6 0 3-2 6 0 6 3 3 2 2 5 0 6 1 4-3 5-5 4-2 3-6 2-6 0-4 1-5-3-3-5-3-2-1-6 1-5 0-2 0-3 1-3z",
];

const ART = {
  paste: (
    <Svg $w={30} $h={38} viewBox="0 0 30 38">
      <rect x="1" y="3" width="28" height="34" rx="2" fill="#b97f3f" />
      <path d="M4 7h22v27H4z" fill="#fff" />
      <path d="M5 12h20M5 16h20M5 20h20M5 24h20M5 28h20" stroke="#b9cfe4" />
      <path d="M9 7V4h4q2-5 4 0h4v3z" fill="#777" />
    </Svg>
  ),
  cut: (
    <Svg $w={16} $h={20} viewBox="0 0 16 20" fill="none" stroke="#9aa9c4" strokeWidth="2">
      <path d="M4 1l6 13M12 1L6 14" /><circle cx="4" cy="16" r="2.500" /><circle cx="12" cy="16" r="2.500" />
    </Svg>
  ),
  copy: (
    <Svg $w={16} $h={20} viewBox="0 0 16 20" fill="#eef2f8" stroke="#9aa9c4">
      <path d="M1 1h6l3 3v10H1zM6 6h6l3 3v10H6zM3 5h4M3 8h3M8 11h5M8 14h5" />
    </Svg>
  ),
  select: (
    <Svg $w={36} $h={27} viewBox="0 0 36 27">
      <rect x="1" y="1" width="34" height="25" fill="none" stroke="#1c5c9e" strokeWidth="1.500" strokeDasharray="3 1" />
    </Svg>
  ),
  crop: (
    <Svg $w={17} viewBox="0 0 17 17" fill="none" stroke="#8fa0bd" strokeWidth="1.500">
      <path d="M4 0v13h13M0 4h13v13M5 12L16 1" />
    </Svg>
  ),
  resize: (
    <Svg $w={17} viewBox="0 0 17 17" fill="#e6f3fb" stroke="#1f6cab" strokeWidth="1.300">
      <path d="M1 9h8v7H1zM5 1h11v10H5z" />
    </Svg>
  ),
  rotate: (
    <Svg $w={17} $h={18} viewBox="0 0 17 18">
      <path d="M11 4v13h6z" fill="#1f6cab" /><path d="M9 8v9H0z" fill="#b5bac1" />
      <path d="M1 6q0-3 5-3M4 1l3 2-3 2" stroke="#1979ca" fill="none" strokeWidth="1.500" />
    </Svg>
  ),
  pencil: (
    <Svg $w={22} viewBox="0 0 22 22">
      <path d="M3 16L15 3l4 3L7 18l-5 3z" fill="#f3cf6b" stroke="#7d5a20" />
      <path d="M15 3l2-2 4 3-2 2z" fill="#d9534f" /><path d="M3 18l-1 3 3-1z" fill="#333" />
    </Svg>
  ),
  bucket: (
    <Svg $w={22} viewBox="0 0 22 22">
      <path d="M6 10l7-7 7 9-8 8z" fill="#cfe3f5" stroke="#5e86ad" />
      <path d="M6 10C2 10 1 14 1 20l3-1c0-4 2-5 5-6z" fill="#e8632a" /><path d="M12 1v9" stroke="#555" />
    </Svg>
  ),
  eraser: (
    <Svg $w={22} viewBox="0 0 22 22">
      <path d="M9 3l9-1 3 4-8 12-8 2-4-4z" fill="#f19a9a" stroke="#c97474" /><path d="M2 15l7-1 4 4-8 2-4-4z" fill="#f7c0c0" />
    </Svg>
  ),
  picker: (
    <Svg $w={22} viewBox="0 0 22 22">
      <path d="M12 8l-9 10-1 3 3-1 9-10z" fill="#dbe9f4" stroke="#54728e" />
      <path d="M10 6l6 6 1-2 3-4q2-3-1-5-3-1-5 2l-2 1z" fill="#1c62a5" />
    </Svg>
  ),
  magnifier: (
    <Svg $w={22} viewBox="0 0 22 22">
      <path d="M13 13l6 8" stroke="#9a7547" strokeWidth="3" /><circle cx="9" cy="8" r="6.500" fill="#e3f1fb" stroke="#8da4ba" strokeWidth="1.500" />
    </Svg>
  ),
  brush: (
    <Svg $w={40} viewBox="0 0 40 40">
      <path d="M.5.500h39v39H.5z" fill="#eef3f7" stroke="#8d8d8d" />
      <path d="M16 8C3 9-1 28 8 35c5 4 14 3 19 0-8-2-17-1-18-9-1-7 2-11 7-14z" fill="#e65a25" />
      <path d="M39 3L27 18l5 5 7-10z" fill="#4b5661" /><ellipse cx="26" cy="25" rx="6" ry="9" transform="rotate(35 26 25)" fill="#9c6f3d" />
    </Svg>
  ),
  outline: (
    <Svg $w={19} $h={18} viewBox="0 0 19 18" fill="none" stroke="#8fa0bd" strokeWidth="1.300">
      <path d="M13 2H1v14h4L17 3M5 16l2-5L16 1l2 2L9 13z" />
    </Svg>
  ),
  fill: (
    <Svg $w={19} $h={20} viewBox="0 0 19 20">
      <path d="M0 14h19v6H0z" fill="#9dafcc" /><path d="M4 9l7-7 6 8-7 6z" fill="#e5ebf4" stroke="#9aa9c4" /><path d="M4 8C1 10 1 13 1 15h3z" fill="#8fa0bd" />
    </Svg>
  ),
  size: (
    <Svg $w={40} $h={33} viewBox="0 0 40 33" fill="#7a8fb3">
      <path d="M0 0h40v1H0zM0 4h40v2H0zM0 9h40v3H0zM0 15h40v5H0zM0 24h40v8H0z" />
    </Svg>
  ),
  palette: <Svg $w={20} viewBox="0 0 26 26">{TASKS[8][2]}</Svg>,
  save: (
    <Svg $w={16} viewBox="0 0 16 16">
      <path d="M0 0h16v16H0z" fill="#7d57b5" /><path d="M3 0h10v8H3z" fill="#fff" /><path d="M4 11h8v5H4z" fill="#d8cbe9" /><path d="M5 12h3v4H5z" fill="#4b3373" />
    </Svg>
  ),
  undo: (
    <Svg $w={18} viewBox="0 0 18 18"><path d="M0 1l1 9 8-3-3-2c5-1 7 7 1 12 10-1 13-15 2-15L4 4z" fill="#2f9ee2" /></Svg>
  ),
  redo: (
    <Svg $w={18} viewBox="0 0 18 18"><path d="M18 1l-1 9-8-3 3-2c-5-1-7 7-1 12C1 16-2 2 9 2l5 2z" fill="#a5b2cb" /></Svg>
  ),
  move: (
    <Svg $w={18} viewBox="0 0 18 18" fill="none" stroke="#2b4a73">
      <path d="M9 1v16M1 9h16M7 3l2-2 2 2M7 15l2 2 2-2M3 7L1 9l2 2M15 7l2 2-2 2" />
    </Svg>
  ),
  selection: (
    <Svg $w={18} viewBox="0 0 18 18" fill="none" stroke="#2b4a73">
      <path d="M4 1h13v12H4z" strokeDasharray="1 1" /><path d="M1 1v13M4 16h13" />
    </Svg>
  ),
  canvas: (
    <Svg $w={18} viewBox="0 0 18 18" fill="none" stroke="#2b4a73">
      <path d="M4 1h13v12H4z" fill="#e3f1fb" /><path d="M1 1v13M4 16h13" />
    </Svg>
  ),
  disk: (
    <Svg $w={17} viewBox="0 0 17 17" fill="#e9eff6" stroke="#2b4a73">
      <path d="M1 1h15v15H1zM4 1v7h9V1M5 16v-5h7v5" /><path d="M6 12h2v4H6z" fill="#2b4a73" />
    </Svg>
  ),
};

const TextTool = styled.span`
  color: #1f3c66;
  font: 700 26px/26px "Liberation Serif", serif;
`;

const Workspace = styled.div`
  display: grid;
  grid-template: minmax(0, 1fr) 22px / minmax(0, 1fr) 22px;
  flex: 1;
  min-height: 0;
`;

const Canvas = styled.div`
  position: relative;
  padding: 5px 0 0 6px;
  overflow: hidden;
  background: #c9d3e5;
  font-size: 12px;
  button { font-size: 12px; color: #262626; }
`;

const Scroll = styled.div`
  display: flex;
  flex-direction: ${(p) => (p.$down ? "column" : "row")};
  align-items: center;
  justify-content: space-between;
  ${(p) => !p.$down && "grid-column: 1 / -1; padding-right: 20px;"}
  background: #f0f0f0;
  border: 1px solid #fff;
  svg { margin: ${(p) => (p.$down ? "5px 0" : "0 5px")}; }
`;

const Thumb = styled.div`
  background: #cdcdcd;
  ${(p) => (p.$down ? "width: 100%; height: 75%; margin-bottom: auto;" : "height: 100%; width: 46%; margin-right: auto;")}
`;

const Arrow = ({ d, color = "#555" }) => (
  <Svg $w={10} viewBox="0 0 10 10" fill="none" stroke={color} strokeWidth="2"><path d={d} /></Svg>
);

const Status = styled.footer`
  display: flex;
  align-items: center;
  flex: none;
  height: 32px;
  padding-right: 6px;
  border-top: 1px solid #d7d7d7;
  background: #f0f0f0;
  color: #1e1e1e;
  font-size: 15px;
`;

const StatusCell = styled.div`
  display: flex;
  align-items: center;
  gap: 6px;
  width: 200px;
  height: 28px;
  padding-left: 4px;
  border-right: ${(p) => (p.$last ? 0 : "1px solid #d7d7d7")};
`;

const Zoom = styled.div`
  display: flex;
  align-items: center;
  gap: 10px;
  margin-left: auto;
`;

const Round = styled.button`
  width: 18px;
  height: 18px;
  border: 1px solid #777;
  border-radius: 50%;
  line-height: 14px;
`;

const ZoomRange = styled.input`
  appearance: none;
  width: 112px;
  height: 22px;
  background: none;
  &::-webkit-slider-runnable-track { height: 4px; border: 1px solid #d0d0d0; background: #e7eaea; }
  &::-webkit-slider-thumb {
    appearance: none;
    width: 12px;
    height: 22px;
    margin-top: -10px;
    background: #0078d7;
    clip-path: polygon(0 0, 100% 0, 100% 75%, 50% 100%, 0 75%);
  }
`;

const Paint = () => (
  <PaintFrame>
    <PaintTitle>
      {ART.palette}<hr />{ART.save}{ART.undo}{ART.redo}<Caret /><hr />
      Images.png - Paint
      <WindowButtons $gap={47}>
        <button aria-label="Minimise"><MinGlyph /></button>
        <button aria-label="Restore"><RestoreGlyph size={12} /></button>
        <button aria-label="Close Paint"><CloseGlyph color="#8a8a8a" /></button>
      </WindowButtons>
    </PaintTitle>
    <PaintTabs>
      <RibbonTab $w={70} $file>File</RibbonTab>
      <RibbonTab $w={69} $on>Home</RibbonTab>
      <RibbonTab $w={64}>View</RibbonTab>
      <TabTools>
        <Svg $w={14} viewBox="0 0 14 14" fill="none" stroke="#888" strokeWidth="1.500"><path d="M1 10l6-6 6 6" /></Svg>
        <Help>?</Help>
      </TabTools>
    </PaintTabs>
    <Ribbon>
      <RibbonGroup $w={125}>
        <RibbonBody $gap={6}>
          <BigButton $w={54}><span>{ART.paste}</span>Paste<Caret /></BigButton>
          <Stack>
            <RowButton $off>{ART.cut}Cut</RowButton>
            <RowButton $off>{ART.copy}Copy</RowButton>
          </Stack>
        </RibbonBody>
        <footer>Clipboard</footer>
      </RibbonGroup>
      <RibbonGroup $w={141}>
        <RibbonBody $gap={5}>
          <BigButton $on $split><span>{ART.select}</span>Select<Caret /></BigButton>
          <Stack>
            <RowButton $off>{ART.crop}Crop</RowButton>
            <RowButton>{ART.resize}Resize</RowButton>
            <RowButton>{ART.rotate}Rotate<Caret $s={3} /></RowButton>
          </Stack>
        </RibbonBody>
        <footer>Image</footer>
      </RibbonGroup>
      <RibbonGroup $w={96}>
        <RibbonBody>
          <ToolGrid>
            <button aria-label="Pencil">{ART.pencil}</button>
            <button aria-label="Fill with colour">{ART.bucket}</button>
            <button aria-label="Text"><TextTool>A</TextTool></button>
            <button aria-label="Eraser">{ART.eraser}</button>
            <button aria-label="Colour picker">{ART.picker}</button>
            <button aria-label="Magnifier">{ART.magnifier}</button>
          </ToolGrid>
        </RibbonBody>
        <footer>Tools</footer>
      </RibbonGroup>
      <RibbonGroup $w={62}>
        <RibbonBody>
          <BigButton $w={52}><span>{ART.brush}</span>Brushes<Caret /></BigButton>
        </RibbonBody>
      </RibbonGroup>
      <RibbonGroup $w={286}>
        <RibbonBody>
          <Gallery>
            <ShapeGrid>
              {SHAPES.map((d, i) => (
                <Svg key={i} $w={20} viewBox="-1 -1 22 22" fill="#e9f5fc" stroke="#1f6cab" strokeWidth="1.300">
                  <path d={d} fill={i < 2 ? "none" : undefined} />
                </Svg>
              ))}
            </ShapeGrid>
            <GalleryScroll>
              <Svg $w={8} $h={5} viewBox="0 0 8 5"><path d="M0 5h8L4 0z" fill="#aab3c2" /></Svg>
              <Caret $s={3} $color="#44546f" />
              <Svg $w={8} $h={8} viewBox="0 0 8 8"><path d="M0 0h8v2H0zM0 4h8L4 8z" fill="#44546f" /></Svg>
            </GalleryScroll>
          </Gallery>
          <Stack>
            <RowButton $off>{ART.outline}Outline<Caret $color="#b0b0b0" /></RowButton>
            <RowButton $off>{ART.fill}Fill<Caret $color="#b0b0b0" /></RowButton>
          </Stack>
        </RibbonBody>
        <footer>Shapes</footer>
      </RibbonGroup>
      <RibbonGroup $w={62}>
        <RibbonBody>
          <BigButton $w={52} $off><span>{ART.size}</span>Size<Caret $color="#b0b0b0" /></BigButton>
        </RibbonBody>
      </RibbonGroup>
      <RibbonGroup $w={435}>
        <RibbonBody>
          <BigButton $on><span><Swatch $w={40} $h={40} $color="#000" /></span>Colour<br />1</BigButton>
          <BigButton><span><Swatch $w={30} $h={30} $color="#fff" /></span>Colour<br />2</BigButton>
          <Palette>
            {COLOURS.map((c, i) => <PaletteCell key={i} $color={c} aria-label={c || "Empty colour"} />)}
          </Palette>
          <BigButton $w={54}><span><Rainbow /></span>Edit<br />colours</BigButton>
        </RibbonBody>
        <footer>Colours</footer>
      </RibbonGroup>
    </Ribbon>
    <Workspace>
      <Canvas>
        <AppWindow active="Search Loads" columns={SEARCH_COLUMNS} />
        <SearchDialog />
      </Canvas>
      <Scroll $down><Arrow d="M1 7l4-4 4 4" /><Thumb $down /><Arrow d="M1 3l4 4 4-4" /></Scroll>
      <Scroll><Arrow d="M7 1L3 5l4 4" /><Thumb /><Arrow d="M3 1l4 4-4 4" /></Scroll>
    </Workspace>
    <Status>
      <StatusCell>{ART.move}</StatusCell>
      <StatusCell>{ART.selection}</StatusCell>
      <StatusCell>{ART.canvas}3840 × 1080px</StatusCell>
      <StatusCell $last>{ART.disk}Size: 327,0KB</StatusCell>
      <Zoom>
        100%
        <Round aria-label="Zoom out">−</Round>
        <ZoomRange type="range" aria-label="Zoom" defaultValue={50} />
        <Round aria-label="Zoom in">+</Round>
      </Zoom>
    </Status>
  </PaintFrame>
);

/* ---------- desktop ---------- */

const Desktop = styled.main`
  display: grid;
  grid-template-columns: 1fr 1fr;
  height: 100vh;
  overflow: hidden;
`;

const Monitor = styled.div`
  position: relative;
  display: flex;
  min-width: 0;
`;

const GhostScroll = styled.div`
  position: absolute;
  left: 3px;
  bottom: 3px;
  display: flex;
  align-items: center;
  gap: 10px;
  width: 244px;
  height: 22px;
  padding: 0 6px;
  border: 1px solid #dcdcdc;
  background: #e9e9e9;
  i { width: 40px; height: 14px; border: 1px solid #d2d2d2; background: #f6f6f6; }
  svg:last-child { margin-left: auto; }
`;

export default function App() {
  return (
    <>
      <GlobalStyle />
      <Desktop>
        <Monitor>
          <AppWindow active="Post Trucks" columns={POST_COLUMNS} stoppable />
          <TaskBar />
          <PostDialog />
          <GhostScroll>
            <Arrow color="#bdbdbd" d="M7 1L3 5l4 4" />
            <i />
            <i />
            <Arrow color="#bdbdbd" d="M3 1l4 4-4 4" />
          </GhostScroll>
        </Monitor>
        <Monitor>
          <Paint />
          <TaskBar large />
        </Monitor>
      </Desktop>
    </>
  );
}
